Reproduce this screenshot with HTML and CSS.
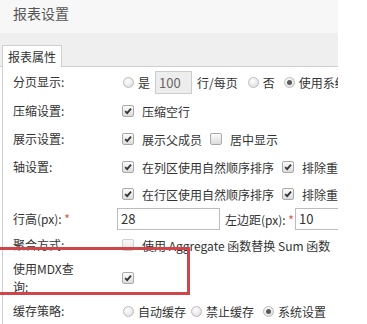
FILE: index.html
```html
<!DOCTYPE html>
<html lang="zh-CN">
<head>
<meta charset="utf-8">
<title>报表设置</title>
<link rel="stylesheet" href="styles.css">
</head>
<body>
<div class="panel">
  <div class="header">报表设置</div>
  <div class="tabbar"><div class="tab">报表属性</div></div>
  <div class="content">
    <div class="row r1">
      <div class="label"><span>分页显示:</span></div>
      <div class="ctrl">
        <label class="ropt"><span class="radio"></span>是</label>
        <span class="inp small disabled">100</span>
        <span class="txt">行/每页</span>
        <label class="ropt"><span class="radio"></span>否</label>
        <label class="ropt"><span class="radio on"></span>使用系统设置</label>
      </div>
    </div>
    <div class="row r2">
      <div class="label"><span>压缩设置:</span></div>
      <div class="ctrl">
        <label class="copt"><span class="chk"><svg viewBox="0 0 12 12"><path d="M2.6 6.2 L5 8.6 L9.6 3.2"/></svg></span>压缩空行</label>
      </div>
    </div>
    <div class="row r3">
      <div class="label"><span>展示设置:</span></div>
      <div class="ctrl">
        <label class="copt"><span class="chk"><svg viewBox="0 0 12 12"><path d="M2.6 6.2 L5 8.6 L9.6 3.2"/></svg></span>展示父成员</label>
        <label class="copt"><span class="chk"></span>居中显示</label>
      </div>
    </div>
    <div class="row r4">
      <div class="label"><span>轴设置:</span></div>
      <div class="ctrl">
        <label class="copt"><span class="chk"><svg viewBox="0 0 12 12"><path d="M2.6 6.2 L5 8.6 L9.6 3.2"/></svg></span>在列区使用自然顺序排序</label>
        <label class="copt"><span class="chk"><svg viewBox="0 0 12 12"><path d="M2.6 6.2 L5 8.6 L9.6 3.2"/></svg></span>排除重复成员</label>
      </div>
    </div>
    <div class="row r5">
      <div class="label"><span></span></div>
      <div class="ctrl">
        <label class="copt"><span class="chk"><svg viewBox="0 0 12 12"><path d="M2.6 6.2 L5 8.6 L9.6 3.2"/></svg></span>在行区使用自然顺序排序</label>
        <label class="copt"><span class="chk"><svg viewBox="0 0 12 12"><path d="M2.6 6.2 L5 8.6 L9.6 3.2"/></svg></span>排除重复成员</label>
      </div>
    </div>
    <div class="row r6">
      <div class="label"><span>行高(px): <i class="req">*</i></span></div>
      <div class="ctrl">
        <span class="inp wide">28</span>
        <span class="txt lm">左边距(px): <i class="req">*</i></span>
        <span class="inp wide2">10</span>
      </div>
    </div>
    <div class="row r7">
      <div class="label"><span>聚合方式:</span></div>
      <div class="ctrl">
        <label class="copt dis"><span class="chk disabled"></span>使用 Aggregate 函数替换 Sum 函数</label>
      </div>
    </div>
    <div class="row r8">
      <div class="label"><span class="wrap">使用MDX查询:</span></div>
      <div class="ctrl">
        <label class="copt"><span class="chk"><svg viewBox="0 0 12 12"><path d="M2.6 6.2 L5 8.6 L9.6 3.2"/></svg></span></label>
      </div>
    </div>
    <div class="row r9">
      <div class="label"><span>缓存策略:</span></div>
      <div class="ctrl">
        <label class="ropt"><span class="radio"></span>自动缓存</label>
        <label class="ropt"><span class="radio"></span>禁止缓存</label>
        <label class="ropt"><span class="radio on"></span>系统设置</label>
      </div>
    </div>
  </div>
  <div class="mark"></div>
</div>
</body>
</html>
```
FILE: styles.css
```css
html, body {
  margin: 0;
  padding: 0;
  background: #fff;
}
body {
  font-family: "Noto Sans CJK SC", "Noto Sans", sans-serif;
  font-size: 12px;
  color: #333;
}
.panel {
  width: 338px;
  height: 324px;
  overflow: hidden;
  position: relative;
  background: #fff;
}
.header {
  height: 33px;
  background: #f7f7f7;
  padding-left: 13px;
  font-size: 14px;
  line-height: 27px;
  color: #555;
  box-sizing: border-box;
}
.tabbar {
  height: 34px;
  background: #efefef;
  display: flex;
  align-items: flex-end;
  padding-left: 2px;
  border-bottom: 1px solid #cfcfcf;
  box-sizing: border-box;
}
.tab {
  width: 60px;
  height: 22px;
  box-sizing: border-box;
  border: 1px solid #cfcfcf;
  border-bottom: none;
  background: #fff;
  margin-bottom: -1px;
  padding-left: 5px;
  line-height: 22px;
  font-size: 12px;
  color: #333;
}
.content {
  margin-left: 2px;
  border-left: 1px solid #cfcfcf;
  padding-left: 10px;
  height: 258px;
  background: #fff;
}
.row {
  display: flex;
  align-items: center;
}
.r1 { height: 30px; }
.r2 { height: 28px; }
.r3 { height: 28px; }
.r4 { height: 28px; }
.r5 { height: 26px; }
.r6 { height: 24px; }
.r7 { height: 28px; }
.r8 { height: 38px; }
.r9 { height: 28px; }
.label {
  width: 104px;
  flex: none;
  line-height: 18px;
}
.label .wrap {
  display: block;
  max-width: 70px;
}
.ctrl {
  display: flex;
  align-items: center;
  white-space: nowrap;
}
.req {
  font-style: normal;
  color: #e0524f;
}
.ropt, .copt {
  display: inline-flex;
  align-items: center;
}
.ropt { gap: 4px; margin-right: 9px; }
.copt { gap: 8px; margin-right: 8px; }
.copt.dis { color: #333; }
.radio {
  width: 11px;
  height: 11px;
  margin-left: 6px;
  box-sizing: border-box;
  border-radius: 50%;
  border: 1px solid #bdbdbd;
  background: radial-gradient(circle at 40% 35%, #ffffff 0%, #eeeeee 45%, #d6d6d6 100%);
  position: relative;
  flex: none;
}
.radio.on::after {
  content: "";
  position: absolute;
  left: 2px;
  top: 2px;
  width: 5px;
  height: 5px;
  border-radius: 50%;
  background: #5a5a5a;
}
.ropt + .ropt .radio { margin-left: 0; }
.chk {
  width: 12px;
  height: 12px;
  margin-left: 5px;
  box-sizing: border-box;
  border: 1px solid #a9a9a9;
  border-radius: 2px;
  background: linear-gradient(#fbfbfb, #dcdcdc);
  flex: none;
  display: flex;
}
.copt + .copt .chk { margin-left: 0; }
.chk svg {
  width: 10px;
  height: 10px;
}
.chk path {
  fill: none;
  stroke: #333;
  stroke-width: 2.1;
}
.chk.disabled {
  border-color: #cfcfcf;
  background: linear-gradient(#f8f8f8, #e8e8e8);
}
.inp {
  display: inline-block;
  box-sizing: border-box;
  border: 1px solid #bcbcbc;
  background: #fff;
  font-size: 13px;
  color: #333;
  padding-left: 3px;
}
.inp.small {
  width: 37px;
  height: 23px;
  line-height: 21px;
  margin-right: 5px;
  background: #ededed;
  border-color: #cccccc;
  color: #666;
}
.ropt:first-child { margin-right: 5px; }
.txt { margin-right: 4px; }
.inp.wide {
  width: 103px;
  height: 22px;
  line-height: 20px;
}
.inp.wide2 {
  width: 60px;
  height: 22px;
  line-height: 20px;
  margin-left: 1px;
}
.lm { margin-left: 5px; margin-right: 0; }
.mark {
  position: absolute;
  left: -3px;
  top: 247px;
  width: 193px;
  height: 48px;
  box-sizing: border-box;
  border: 3px solid #d0454a;
}
```
